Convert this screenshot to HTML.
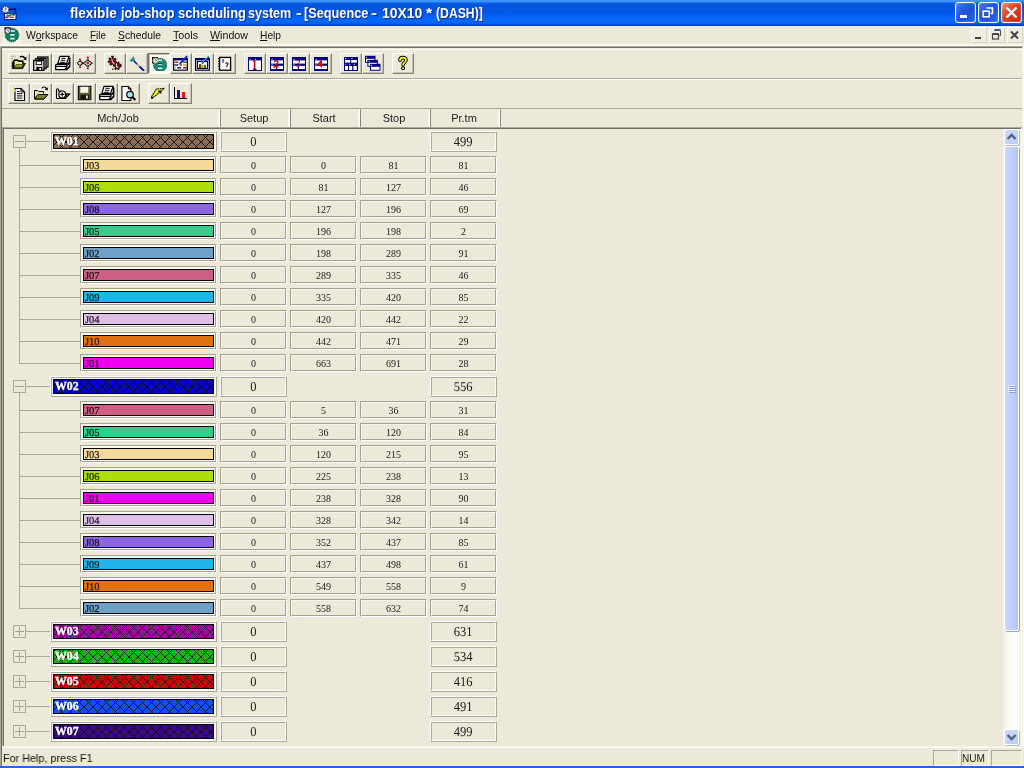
<!DOCTYPE html><html><head><meta charset="utf-8"><title>flexible job-shop scheduling system</title><style>
*{box-sizing:border-box;margin:0;padding:0}
html,body{width:1024px;height:768px;overflow:hidden}
body{position:relative;background:#ECE9D8;font-family:"Liberation Sans",sans-serif;font-size:11px;color:#000}
.a{position:absolute}
.title{left:0;top:0;width:1024px;height:26px;background:linear-gradient(to bottom,#3D97FD 0px,#3A92FA 1.5px,#1A72EA 2.6px,#0557DE 4px,#0455E0 9px,#0458E8 13px,#0460F4 16px,#0468F8 19px,#0467F8 22px,#045CEA 24px,#0242C4 25px,#0034B0 26px)}
.ttext{top:4px;color:#fff;font-weight:bold;font-size:14px;line-height:18px;white-space:nowrap;text-shadow:1px 1px 1px #0A2A8A;transform-origin:0 0}
.menu span{position:absolute;top:28px;line-height:14px;font-size:11px;white-space:nowrap;color:#111}
.menu u{text-decoration:underline}
.tb{width:22px;height:21px;border:1px solid;border-color:#fff #85826F #85826F #fff;background:#ECE9D8;box-shadow:inset -1px -1px 0 #C6C3B3}
.tb svg{position:absolute;left:2px;top:1px}
.hd{top:110px;height:18px;font-size:11px;line-height:17px;text-align:center;color:#222}
.wc{height:21px;border:1px solid;border-color:#fff #ACA899 #ACA899 #fff;font-family:"Liberation Serif",serif;font-size:13.5px;text-rendering:geometricPrecision;line-height:17px;text-align:center;color:#1a1a1a}
.wc i{position:absolute;left:0;top:0;right:0;bottom:0;border:1px solid;border-color:#ACA899 #fff #fff #ACA899}
.wc b{font-weight:normal;display:inline-block;transform:scaleX(.93);position:relative;left:0;top:1px}
.jc{height:18px;border:1px solid;border-color:#A5A190 #fff #fff #A5A190;font-family:"Liberation Serif",serif;font-size:10px;line-height:15px;text-align:center;color:#222}
.jc i{position:absolute;left:0;top:0;right:0;bottom:0;border:1px solid;border-color:#F7F6EE #A5A190 #A5A190 #F7F6EE}
.jc b{font-weight:normal;display:inline-block;position:relative;left:0;top:1px}
.jb{height:12px;border:1px solid #000;font-family:"Liberation Serif",serif;font-size:10.5px;line-height:11px;color:rgba(0,0,0,.8);-webkit-text-stroke:.25px rgba(0,0,0,.8);text-rendering:geometricPrecision}
.jb span{position:absolute;left:1px;top:1px}
.wb{height:15px;border:1px solid #000;overflow:hidden}
.wl{font-family:"Liberation Serif",serif;font-weight:bold;font-size:13px;line-height:14px;color:#fff;-webkit-text-stroke:.35px #fff;left:1px;top:-1px;transform-origin:0 0;transform:scaleX(.91)}
.ln{background:#ACA899}
.xb{width:13px;height:13px;border:1px solid #ACA899}
</style></head><body><div id="root" style="position:absolute;left:0;top:0;width:1024px;height:768px;will-change:transform">
<div class="a title"></div>
<div class="a ttext" style="left:69.9px;transform:scaleX(0.968)">flexible</div>
<div class="a ttext" style="left:120.8px;transform:scaleX(0.903)">job-shop</div>
<div class="a ttext" style="left:177.7px;transform:scaleX(0.919)">scheduling</div>
<div class="a ttext" style="left:248.4px;transform:scaleX(0.895)">system</div>
<div class="a ttext" style="left:296.0px;transform:scaleX(1.241)">-</div>
<div class="a ttext" style="left:304.0px;transform:scaleX(0.909)">[Sequence</div>
<div class="a ttext" style="left:370.6px;transform:scaleX(1.284)">-</div>
<div class="a ttext" style="left:382.0px;transform:scaleX(0.995)">10X10</div>
<div class="a ttext" style="left:425.6px;transform:scaleX(1.137)">*</div>
<div class="a ttext" style="left:436.4px;transform:scaleX(0.872)">(DASH)]</div>
<svg class="a" style="left:1px;top:5px" width="17" height="16" viewBox="0 0 17 16"><rect x="3.4" y="8.4" width="11.6" height="6.2" fill="#F6F6F4" stroke="#0A0A70" stroke-width="1"/><path d="M4.2 12.2h3.2" stroke="#0A0A60" stroke-width="1.3"/><path d="M8.6 12.3h4.2" stroke="#B04810" stroke-width="1.3"/><rect x="11.2" y="9.2" width="2.6" height="1.3" fill="#10106A"/><path d="M8.2 4.6l6.4-.6M14.4 3.4v4.4" stroke="#0A0A78" stroke-width="1.5" fill="none"/><circle cx="4.6" cy="4.6" r="3.3" fill="#ECE8EC" stroke="#14145A" stroke-width="1" stroke-dasharray="1.6 .8"/><path d="M4.6 2.6v2.6" stroke="#7A8A40" stroke-width="1.4" fill="none"/><path d="M3 6l3 .6" stroke="#E8C0B8" stroke-width="1.4"/><path d="M5.6 9.8l2.8 1 3-2.6" stroke="#1E8048" stroke-width="1.9" fill="none"/><path d="M6.4 9.3h2.2" stroke="#F0F8F0" stroke-width=".9"/></svg>
<div class="a" style="left:955px;top:2px;width:21px;height:21px;border:1px solid #fff;border-radius:3px;background:linear-gradient(135deg,#4A7CF0 0%,#2A5CE0 35%,#1E50D8 60%,#2E6AE8 100%);box-shadow:inset 0 0 2px rgba(255,255,255,.35)"><svg class="a" style="left:-1px;top:-1px" width="21" height="21"><rect x="5" y="13" width="7" height="3" fill="#fff"/></svg></div><div class="a" style="left:978px;top:2px;width:21px;height:21px;border:1px solid #fff;border-radius:3px;background:linear-gradient(135deg,#4A7CF0 0%,#2A5CE0 35%,#1E50D8 60%,#2E6AE8 100%);box-shadow:inset 0 0 2px rgba(255,255,255,.35)"><svg class="a" style="left:-1px;top:-1px" width="21" height="21"><path d="M8.5 6h6v5.5h-2" fill="none" stroke="#fff" stroke-width="1.6"/><rect x="5.2" y="9.2" width="6" height="5.6" fill="none" stroke="#fff" stroke-width="1.6"/></svg></div><div class="a" style="left:1001px;top:2px;width:21px;height:21px;border:1px solid #fff;border-radius:3px;background:linear-gradient(135deg,#F09070 0%,#E05030 35%,#D03818 65%,#C83010 100%);box-shadow:inset 0 0 2px rgba(255,255,255,.35)"><svg class="a" style="left:-1px;top:-1px" width="21" height="21"><path d="M5.5 5.5l10 10M15.5 5.5l-10 10" stroke="#fff" stroke-width="2.3"/></svg></div><div class="a" style="left:971px;top:27px;width:16px;height:16px;border:1px solid;border-color:#fff #D8D4C4 #D8D4C4 #fff;background:#F0EEE2"><svg class="a" style="left:-1px;top:-1px" width="16" height="16"><rect x="4" y="10" width="6" height="2" fill="#444"/></svg></div><div class="a" style="left:989px;top:27px;width:16px;height:16px;border:1px solid;border-color:#fff #D8D4C4 #D8D4C4 #fff;background:#F0EEE2"><svg class="a" style="left:-1px;top:-1px" width="16" height="16"><path d="M5.5 3.5h6v5h-1" fill="none" stroke="#444" stroke-width="1"/><path d="M5.5 3h6" stroke="#445A90" stroke-width="2"/><rect x="3.5" y="7" width="6" height="5" fill="none" stroke="#444" stroke-width="1.2"/><path d="M3.5 7h6" stroke="#444" stroke-width="2"/></svg></div><div class="a" style="left:1007px;top:27px;width:16px;height:16px;border:1px solid;border-color:#fff #D8D4C4 #D8D4C4 #fff;background:#F0EEE2"><svg class="a" style="left:-1px;top:-1px" width="16" height="16"><path d="M4 4.5l7 7M11 4.5l-7 7" stroke="#444" stroke-width="2"/></svg></div>
<div class="a" style="left:0;top:26px;width:1024px;height:1px;background:#E8EDF8"></div>
<div class="menu">
<span style="left:26px;transform-origin:0 0;transform:scaleX(0.948)">W<u>o</u>rkspace</span>
<span style="left:90px;transform-origin:0 0;transform:scaleX(0.901)"><u>F</u>ile</span>
<span style="left:118px;transform-origin:0 0;transform:scaleX(0.937)"><u>S</u>chedule</span>
<span style="left:173px;transform-origin:0 0;transform:scaleX(0.973)"><u>T</u>ools</span>
<span style="left:210px;transform-origin:0 0;transform:scaleX(0.971)"><u>W</u>indow</span>
<span style="left:260px;transform-origin:0 0;transform:scaleX(0.928)"><u>H</u>elp</span>
</div>
<svg class="a" style="left:3px;top:26px" width="18" height="18" viewBox="0 0 18 18"><rect x="0" y="0" width="18" height="18" fill="#F6F5EE" opacity=".7"/><circle cx="9" cy="9" r="6.8" fill="#108060" stroke="#063828" stroke-width=".9" stroke-dasharray="1.3 .8"/><rect x="1.5" y="1.2" width="6" height="6" fill="#0A0A0A"/><circle cx="4.8" cy="4.8" r="2.5" fill="#F4F4EC" stroke="#5A6A4A" stroke-width=".7"/><path d="M4.8 3.4v1.6h1.2" stroke="#333" stroke-width=".7" fill="none"/><rect x="7.8" y="4.2" width="4" height="1.6" fill="#E8F0EC"/><rect x="7.2" y="8" width="4.4" height="1.7" fill="#E8F0EC"/><rect x="7.2" y="11.8" width="4.4" height="1.7" fill="#E8F0EC"/></svg>
<div class="a" style="left:0;top:44px;width:1024px;height:1px;background:#F6F5EE"></div>
<div class="a" style="left:0;top:45px;width:1024px;height:1px;background:#fff"></div>
<div class="a" style="left:0;top:46px;width:1023px;height:1px;background:#ACA899"></div>
<div class="a" style="left:1px;top:47px;width:1021px;height:1px;background:#716F64"></div>
<div class="a" style="left:2px;top:49px;width:1020px;height:1px;background:#fff"></div>
<div class="a" style="left:0;top:46px;width:1px;height:720px;background:#ACA899"></div>
<div class="a" style="left:1px;top:47px;width:1px;height:719px;background:#716F64"></div>
<div class="a" style="left:1022px;top:47px;width:1px;height:699px;background:#F1EFE2"></div>
<div class="a" style="left:1023px;top:46px;width:1px;height:701px;background:#fff"></div>
<div class="a" style="left:2px;top:78px;width:1020px;height:1px;background:#ACA899"></div>
<div class="a" style="left:2px;top:79px;width:1020px;height:1px;background:#fff"></div>
<div class="a" style="left:2px;top:108px;width:1020px;height:1px;background:#ACA899"></div>
<div class="a tb" style="left:8px;top:53px"><svg width="16" height="16" viewBox="0 0 16 16" ><path d="M1.2 7.6l2.2-2.8h3.6l1 1h4.2v2.6h2.2l-2.8 5.2h-10.4z" fill="#000" stroke="#000" stroke-width=".8" stroke-linejoin="round"/><path d="M3.6 6h2.8l1 1h3.8v2.2h-6l-1.6 2.6z" fill="#E6EE9C"/><path d="M5.6 9.6h7l-2 3h-7.4z" fill="#8A9828"/><path d="M8.8 2.2q3-2 5 1.2" fill="none" stroke="#000" stroke-width="1.3"/><path d="M15.4 1.6v3.6l-3-.8z" fill="#000"/><g fill="#9A9A58"><rect x=".4" y=".8" width="1" height="1"/><rect x="2" y=".8" width="1" height="1"/><rect x="3.6" y=".8" width="1" height="1"/><rect x=".4" y="2.8" width="1.4" height="1"/><rect x=".8" y="4.6" width="1" height="1"/></g></svg></div>
<div class="a tb" style="left:30px;top:53px"><svg width="16" height="16" viewBox="0 0 16 16" ><rect x="4.6" y="2" width="10.4" height="10" fill="#D0D0C8" stroke="#000" stroke-width="1.2"/><rect x="7.199999999999999" y="2.8" width="5.4" height="3.4" fill="#fff" stroke="#000" stroke-width=".8"/><rect x="2.6" y="3.7" width="10.4" height="10" fill="#D0D0C8" stroke="#000" stroke-width="1.2"/><rect x="5.2" y="4.5" width="5.4" height="3.4" fill="#fff" stroke="#000" stroke-width=".8"/><rect x="0.6" y="5.4" width="10.4" height="10" fill="#D0D0C8" stroke="#000" stroke-width="1.2"/><rect x="3.2" y="6.2" width="5.4" height="3.4" fill="#fff" stroke="#000" stroke-width=".8"/><rect x="3.4" y="12.0" width="6" height="3.2" fill="#000"/><rect x="6.3999999999999995" y="13.0" width="1.7" height="2" fill="#fff"/></svg></div>
<div class="a tb" style="left:52px;top:53px"><svg width="16" height="16" viewBox="0 0 16 16" ><path d="M5 1.3h9.2l-2.7 7.1h-8.6z" fill="#fff" stroke="#000" stroke-width="1.2" stroke-linejoin="round"/><path d="M6.4 3.3h4.3M5.8 5.3h4.5M5.2 7.3h4.6" stroke="#000" stroke-width="1"/><path d="M14.6 3v3.4" stroke="#000" stroke-width="1.6" stroke-linecap="round"/><path d="M1.3 9.4h10.6l2.9-2.4v4.5l-2.9 3.1h-11.2v-4.4z" fill="#fff" stroke="#000" stroke-width="1.3" stroke-linejoin="round"/><path d="M.7 11.4h11.2" stroke="#000" stroke-width="1.3"/><path d="M11.9 9.4v5.2" stroke="#000" stroke-width="1.2"/><rect x="9.8" y="12.6" width="2" height="1.8" fill="#000"/><path d="M12.6 10.5l1.6-1.6M12.8 12.6l1.4-1.5" stroke="#000" stroke-width=".9"/></svg></div>
<div class="a tb" style="left:74px;top:53px"><svg width="16" height="16" viewBox="0 0 16 16" ><rect x="-2" y="-1" width="20" height="19" fill="#F6E4E0" opacity=".55"/><path d="M3 5.6l2.8 2.6-2.8 2.6-2.8-2.6z" fill="none" stroke="#000" stroke-width="1.3" stroke-dasharray="1.7 .5"/><path d="M10.8 4.7l4.1 3.5-4.1 3.5-4.1-3.5z" fill="none" stroke="#000" stroke-width="1.3" stroke-dasharray="1.7 .5"/><g fill="#A42434"><circle cx="3" cy="4.4" r="1"/><circle cx="3" cy="12.2" r="1"/><circle cx="10.8" cy="2.6" r="1.2"/><circle cx="10.8" cy="8" r="1.4"/><circle cx="10.8" cy="13.4" r="1.1"/></g></svg></div>
<div class="a tb" style="left:104px;top:53px"><svg width="16" height="16" viewBox="0 0 16 16" ><circle cx="5.4" cy="6.2" r="3.4" fill="#6A1018" stroke="#2A0608" stroke-width="2.4" stroke-dasharray="1.7 1.3"/><circle cx="10.4" cy="10.6" r="3" fill="#6A1018" stroke="#1A0404" stroke-width="2.4" stroke-dasharray="1.5 1.3"/><circle cx="5.4" cy="6.2" r="3.2" fill="#6A1018"/><circle cx="10.4" cy="10.6" r="2.8" fill="#6A1018"/><path d="M4.6 3.6l1 3.6 2 2" stroke="#E8B4B8" stroke-width="1.1" fill="none"/><path d="M9.4 8.6l.2 3 1.4 1" stroke="#F0D0D0" stroke-width="1.2" fill="none"/><path d="M4 1.3h2.8" stroke="#000" stroke-width="1"/><path d="M5 14.3h7.6" stroke="#000" stroke-width="1.1" stroke-dasharray="1.6 1.2"/></svg></div>
<div class="a tb" style="left:126px;top:53px"><svg width="16" height="16" viewBox="0 0 16 16" ><path d="M.4 5.6l4.3-4.3 1.2 3.6-3.6 1.9z" fill="#208880"/><path d="M1 5.4l3.5-3.4" stroke="#70D0C8" stroke-width=".8"/><path d="M4.6 5.6l3.6 3.6" stroke="#102880" stroke-width="1.5"/><path d="M8.4 9.4l2.2 2.2" stroke="#A0A0A8" stroke-width="1.5"/><path d="M11 12l3.6 3.4" stroke="#1010B0" stroke-width="1.9" stroke-linecap="round"/></svg></div>
<div class="a tb" style="left:148px;top:53px;border-color:#716F64 #fff #fff #716F64;background:#F8F7F2;box-shadow:inset 1px 1px 0 #C4C0B0"><svg width="16" height="16" viewBox="0 0 16 16" ><circle cx="9.2" cy="10" r="6.7" fill="#109070" stroke="#083828" stroke-width=".9" stroke-dasharray="1.3 .9"/><rect x="1" y="2" width="6" height="6.4" fill="#0A0A0A"/><circle cx="4.6" cy="5.6" r="2.7" fill="#F0F0E0" stroke="#8A9060" stroke-width=".9"/><path d="M4.6 4v1.8h1.5" stroke="#555" stroke-width=".7" fill="none"/><rect x="7.4" y="4.6" width="3.8" height="1.5" fill="#D8F0EC"/><rect x="7" y="8.2" width="4.2" height="1" fill="#102060"/><rect x="7" y="9.2" width="4.2" height="1.4" fill="#C8E0F8"/><rect x="7" y="10.6" width="4.2" height="1" fill="#0A3030"/><rect x="7" y="12.4" width="4.2" height="1.6" fill="#E0F4F0"/></svg></div>
<div class="a tb" style="left:170px;top:53px"><svg width="16" height="16" viewBox="0 0 16 16" ><rect x=".6" y="3.6" width="13.8" height="11.6" fill="#fff" stroke="#00003A" stroke-width="1.2"/><rect x="1" y="3.4" width="13" height="2" fill="#000080"/><path d="M1.4 7.2h4" stroke="#8A1818" stroke-width="1.3"/><path d="M10 7.2h4" stroke="#284020" stroke-width="1.3"/><path d="M1.4 10h4" stroke="#101070" stroke-width="1.4"/><path d="M6.6 10h2.4" stroke="#703010" stroke-width="1.4"/><path d="M10 10h4" stroke="#C89820" stroke-width="1.5"/><path d="M1.4 12.8h1.8" stroke="#C09830" stroke-width="1.4"/><path d="M4.2 12.8h4" stroke="#101010" stroke-width="1.4"/><path d="M10 12.8h4" stroke="#701010" stroke-width="1.4"/><path d="M14 1.2l-6.8 7" stroke="#1838D0" stroke-width="1.7"/><path d="M14.4 1.8l-6.6 6.8" stroke="#000060" stroke-width=".7"/><path d="M7.4 8l-.9 1.2" stroke="#000" stroke-width="1.1"/></svg></div>
<div class="a tb" style="left:192px;top:53px"><svg width="16" height="16" viewBox="0 0 16 16" ><rect x=".6" y="3.6" width="13.8" height="11.6" fill="#fff" stroke="#000050" stroke-width="1.2"/><rect x="1" y="3.4" width="13" height="2" fill="#000080"/><rect x="2.4" y="6.5" width="10.2" height="7" fill="#fff" stroke="#000" stroke-width="1.1"/><rect x="4" y="9" width="2.2" height="4" fill="#883010"/><rect x="6.6" y="10" width="1.4" height="3" fill="#909030"/><rect x="8.8" y="9.8" width="2.2" height="3.2" fill="#208828"/><path d="M13.6 1.2l-7 7.2" stroke="#38A8F0" stroke-width="1.5"/><path d="M14.2 1.8l-7 7.2" stroke="#000050" stroke-width=".8"/></svg></div>
<div class="a tb" style="left:214px;top:53px"><svg width="16" height="16" viewBox="0 0 16 16" ><rect x="2.6" y="2.4" width="11" height="12.8" fill="#FCFCFA" stroke="#000" stroke-width="1.3"/><path d="M1.2 3.6h1.4M1.2 6.2h1.4M1.2 8.8h1.4M1.2 11.4h1.4M1.2 14h1.4" stroke="#000" stroke-width="1.2"/><path d="M6 4.1v3.6" stroke="#2828B8" stroke-width="1.3"/><path d="M8.6 8.6q1.6-1.6 2.4 0q0 .8-1 1.6v1" fill="none" stroke="#601828" stroke-width="1.2"/><rect x="9.4" y="11.2" width="1.1" height="1" fill="#601828"/></svg></div>
<div class="a tb" style="left:244px;top:53px"><svg width="16" height="16" viewBox="0 0 16 16" ><rect x="1.5" y="2.5" width="13" height="13" fill="#fff" stroke="#000080"/><rect x="2" y="3" width="12" height="2.4" fill="#000080"/><rect x="2.6" y="3.8" width="1" height="1" fill="#fff"/><rect x="8" y="3.8" width="1" height="1" fill="#fff"/><path d="M6.2 6.5l1.4-1v8.5M6 14.2h3.4" stroke="#D4001C" stroke-width="1.5" fill="none"/><path d="M7.6 14v1.8" stroke="#000060" stroke-width="1"/></svg></div>
<div class="a tb" style="left:266px;top:53px"><svg width="16" height="16" viewBox="0 0 16 16" ><rect x="1.5" y="2.5" width="13" height="13" fill="#fff" stroke="#000080"/><rect x="2" y="3" width="12" height="2.4" fill="#000080"/><rect x="2.6" y="3.8" width="1" height="1" fill="#fff"/><rect x="2" y="8.6" width="12" height="2.2" fill="#000080"/><rect x="2.6" y="9.2" width="1" height="1" fill="#fff"/><rect x="2" y="14" width="12" height="1" fill="#000080"/><rect x="7" y="10.8" width="1" height="3.5" fill="#000080"/><path d="M5.2 7q2-2.3 3.6-.5q.6 1.6-3.4 5.2h4" stroke="#D4001C" stroke-width="1.4" fill="none"/></svg></div>
<div class="a tb" style="left:288px;top:53px"><svg width="16" height="16" viewBox="0 0 16 16" ><rect x="1.5" y="2.5" width="13" height="13" fill="#fff" stroke="#000080"/><rect x="2" y="3" width="12" height="2.4" fill="#000080"/><rect x="2.6" y="3.8" width="1" height="1" fill="#fff"/><rect x="2" y="8.6" width="12" height="2.2" fill="#000080"/><rect x="2.6" y="9.2" width="1" height="1" fill="#fff"/><rect x="2" y="14" width="12" height="1" fill="#000080"/><rect x="7" y="10.8" width="1" height="3.5" fill="#000080"/><path d="M5.5 6q2-1.6 3 0q0 2-2 2.4q2.6.4 2 2.6q-1.4 1.6-3.2.2" stroke="#D4001C" stroke-width="1.3" fill="none" stroke-dasharray="2 .7"/></svg></div>
<div class="a tb" style="left:310px;top:53px"><svg width="16" height="16" viewBox="0 0 16 16" ><rect x="1.5" y="2.5" width="13" height="13" fill="#fff" stroke="#000080"/><rect x="2" y="3" width="12" height="2.4" fill="#000080"/><rect x="2.6" y="3.8" width="1" height="1" fill="#fff"/><rect x="2" y="8.6" width="12" height="2.2" fill="#000080"/><rect x="2.6" y="9.2" width="1" height="1" fill="#fff"/><rect x="2" y="14" width="12" height="1" fill="#000080"/><path d="M8.3 5.5l-3 4.5h4.5M8.3 5.5v7" stroke="#D4001C" stroke-width="1.5" fill="none"/></svg></div>
<div class="a tb" style="left:340px;top:53px"><svg width="16" height="16" viewBox="0 0 16 16" ><rect x="1" y="2" width="14" height="14" fill="#000080"/><rect x="2" y="5" width="5.2" height="2.6" fill="#fff"/><rect x="8.2" y="5" width="5.6" height="2.6" fill="#fff"/><rect x="2" y="11" width="3" height="4" fill="#fff"/><rect x="6" y="11" width="3.2" height="4" fill="#fff"/><rect x="10.4" y="11" width="3.4" height="4" fill="#fff"/><rect x="2.2" y="3" width="1" height="1" fill="#fff"/><rect x="8.5" y="3" width="1" height="1" fill="#fff"/><rect x="2.2" y="8.8" width="1" height="1" fill="#fff"/><rect x="6.3" y="8.8" width="1" height="1" fill="#fff"/><rect x="10.7" y="8.8" width="1" height="1" fill="#fff"/></svg></div>
<div class="a tb" style="left:362px;top:53px"><svg width="16" height="16" viewBox="0 0 16 16" ><rect x="0" y="0.8" width="10.5" height="7" fill="#000080"/><rect x="1" y="3.8" width="8.5" height="3" fill="#fff"/><rect x="1.2" y="1.8" width="1" height="1" fill="#fff"/><rect x="2.4" y="4.8" width="10.5" height="7" fill="#000080"/><rect x="3.4" y="7.8" width="8.5" height="3" fill="#fff"/><rect x="3.5999999999999996" y="5.8" width="1" height="1" fill="#fff"/><rect x="5" y="8.8" width="10.5" height="7" fill="#000080"/><rect x="6" y="11.8" width="8.5" height="3" fill="#fff"/><rect x="6.2" y="9.8" width="1" height="1" fill="#fff"/></svg></div>
<div class="a tb" style="left:392px;top:53px"><svg width="16" height="16" viewBox="0 0 16 16" ><g fill="none" stroke-linecap="round"><path d="M5 5.2q0-2.6 3-2.6q3 0 3 2.5q0 1.5-1.8 2.6q-1.1.7-1.1 2.2" stroke="#000" stroke-width="3.6"/><path d="M8.1 13.1v.1" stroke="#000" stroke-width="3.8"/><path d="M5 5.2q0-2.6 3-2.6q3 0 3 2.5q0 1.5-1.8 2.6q-1.1.7-1.1 2.2" stroke="#F4F420" stroke-width="1.7"/><path d="M8.1 13.1v.1" stroke="#F4F420" stroke-width="1.9"/></g></svg></div>
<div class="a tb" style="left:8px;top:83px"><svg width="16" height="16" viewBox="0 0 16 16" ><path d="M4 3.5h6l3.5 3.5v8.5h-9.5z" fill="#fff" stroke="#000" stroke-width="1.2"/><path d="M10 3.5v3.5h3.5" fill="none" stroke="#000"/><path d="M5.8 6.5h3M5.8 8.7h5.6M5.8 10.9h5.6M5.8 13.1h5.6" stroke="#000" stroke-width="1"/><path d="M2.5 2v7M0 5.5h5" stroke="#E8E870" stroke-width="1"/><path d="M1 3.5l3 4M4 3.5l-3 4" stroke="#F4F4B0" stroke-width=".8"/></svg></div>
<div class="a tb" style="left:30px;top:83px"><svg width="16" height="16" viewBox="0 0 16 16" ><path d="M1.5 5.5h3l1 1h5v2" fill="#F4F4A8" stroke="#000"/><path d="M1.5 5.5v8.5h9.5" fill="none" stroke="#000"/><path d="M2 6h2.5l1 1H10v2H4.5L2 13.5z" fill="#E8E8A0"/><path d="M4.8 9.5h10.2l-4 4.5h-9.5z" fill="#808020" stroke="#000"/><path d="M8.8 3.3c1.3-1.8 3.6-1.8 5 .6" fill="none" stroke="#000" stroke-width="1.1"/><path d="M15 2.6l-.5 3-2.8-1z" fill="#000"/></svg></div>
<div class="a tb" style="left:52px;top:83px"><svg width="16" height="16" viewBox="0 0 16 16" ><path d="M1.5 13.5v-8.5q0-1.2 1-1.2q1 0 1 1.2v1h3" fill="none" stroke="#000" stroke-width="1.1"/><path d="M1.5 13.5h9l4-4.5h-3.5" fill="none" stroke="#000" stroke-width="1.1"/><path d="M10.5 13.5l4-4.5h-3z" fill="#808020" stroke="#000"/><circle cx="7.2" cy="9.4" r="3.4" fill="#F8F8E8" stroke="#000" stroke-width="1.2"/><path d="M7.2 7.4v4M5.2 9.4h4" stroke="#000" stroke-width="1.1"/></svg></div>
<div class="a tb" style="left:74px;top:83px"><svg width="16" height="16" viewBox="0 0 16 16" ><rect x="1.3" y="1.3" width="12.6" height="13.4" fill="#5C5C28" stroke="#000" stroke-width="1"/><rect x="3.3" y="1.8" width="8" height="6" fill="#F4F4E8"/><rect x="3.5" y="9.8" width="8.5" height="4.5" fill="#101008"/><rect x="9" y="10.5" width="1.8" height="3.2" fill="#E8E8D8"/><rect x="12.2" y="2.5" width="1" height="1" fill="#D8D8A0"/></svg></div>
<div class="a tb" style="left:96px;top:83px"><svg width="16" height="16" viewBox="0 0 16 16" ><path d="M5 1.3h9.2l-2.7 7.1h-8.6z" fill="#fff" stroke="#000" stroke-width="1.2" stroke-linejoin="round"/><path d="M6.4 3.3h4.3M5.8 5.3h4.5M5.2 7.3h4.6" stroke="#000" stroke-width="1"/><path d="M14.6 3v3.4" stroke="#000" stroke-width="1.6" stroke-linecap="round"/><path d="M1.3 9.4h10.6l2.9-2.4v4.5l-2.9 3.1h-11.2v-4.4z" fill="#fff" stroke="#000" stroke-width="1.3" stroke-linejoin="round"/><path d="M.7 11.4h11.2" stroke="#000" stroke-width="1.3"/><path d="M11.9 9.4v5.2" stroke="#000" stroke-width="1.2"/><rect x="9.8" y="12.6" width="2" height="1.8" fill="#000"/><path d="M12.6 10.5l1.6-1.6M12.8 12.6l1.4-1.5" stroke="#000" stroke-width=".9"/></svg></div>
<div class="a tb" style="left:118px;top:83px"><svg width="16" height="16" viewBox="0 0 16 16" ><g transform="translate(-1.6,0)"><path d="M2.5 1.5h6.5l2.5 2.5v11.5h-9z" fill="#fff" stroke="#000" stroke-width="1.1"/><path d="M9 1.5v2.5h2.5" fill="none" stroke="#000"/><circle cx="10.6" cy="9.6" r="3.3" fill="#A8E0E8" stroke="#000" stroke-width="1.2"/><path d="M13 12l3 3" stroke="#000" stroke-width="2"/></g></svg></div>
<div class="a tb" style="left:148px;top:83px"><svg width="16" height="16" viewBox="0 0 16 16" ><path d="M13 3.4l-7.6.6-5 7.8.8 1.6 8.2-6.8z" fill="#F0F018" stroke="#000" stroke-width="1.1" stroke-dasharray="1.8 .7" stroke-linejoin="round"/><path d="M.4 12.4l1.2.8" stroke="#000" stroke-width="2"/><path d="M7.4 6l2.4 1-.2 1.4" fill="none" stroke="#000" stroke-width="1.4"/></svg></div>
<div class="a tb" style="left:170px;top:83px"><svg width="16" height="16" viewBox="0 0 16 16" shape-rendering="crispEdges"><path d="M1.5 2v11.5h12.5" fill="none" stroke="#000" stroke-width="1"/><rect x="4.2" y="5.2" width="2.6" height="8" fill="#101890"/><rect x="9.3" y="7" width="2.6" height="6" fill="#E01818"/></svg></div>
<div class="a hd" style="left:97px;width:42px">Mch/Job</div>
<div class="a hd" style="left:219px;width:70px">Setup</div>
<div class="a hd" style="left:289px;width:70px">Start</div>
<div class="a hd" style="left:359px;width:70px">Stop</div>
<div class="a hd" style="left:429px;width:70px">Pr.tm</div>
<div class="a" style="left:218px;top:109px;width:1px;height:18px;background:#F8F7F0"></div>
<div class="a" style="left:219px;top:109px;width:1px;height:18px;background:#fff"></div>
<div class="a" style="left:220px;top:109px;width:1px;height:18px;background:#8A8878"></div>
<div class="a" style="left:288px;top:109px;width:1px;height:18px;background:#F8F7F0"></div>
<div class="a" style="left:289px;top:109px;width:1px;height:18px;background:#fff"></div>
<div class="a" style="left:290px;top:109px;width:1px;height:18px;background:#8A8878"></div>
<div class="a" style="left:358px;top:109px;width:1px;height:18px;background:#F8F7F0"></div>
<div class="a" style="left:359px;top:109px;width:1px;height:18px;background:#fff"></div>
<div class="a" style="left:360px;top:109px;width:1px;height:18px;background:#8A8878"></div>
<div class="a" style="left:428px;top:109px;width:1px;height:18px;background:#F8F7F0"></div>
<div class="a" style="left:429px;top:109px;width:1px;height:18px;background:#fff"></div>
<div class="a" style="left:430px;top:109px;width:1px;height:18px;background:#8A8878"></div>
<div class="a" style="left:498px;top:109px;width:1px;height:18px;background:#F8F7F0"></div>
<div class="a" style="left:499px;top:109px;width:1px;height:18px;background:#fff"></div>
<div class="a" style="left:500px;top:109px;width:1px;height:18px;background:#8A8878"></div>
<div class="a" style="left:2px;top:127px;width:1020px;height:1px;background:#ACA899"></div>
<div class="a" style="left:3px;top:128px;width:1018px;height:1px;background:#716F64"></div>
<div class="a" style="left:2px;top:127px;width:1px;height:620px;background:#ACA899"></div>
<div class="a" style="left:3px;top:128px;width:1px;height:618px;background:#716F64"></div>
<div class="a" style="left:4px;top:129px;width:1px;height:617px;background:#F1EFE2"></div>
<div class="a" style="left:1020px;top:129px;width:1px;height:617px;background:#F1EFE2"></div>
<div class="a" style="left:1021px;top:128px;width:1px;height:619px;background:#fff"></div>
<svg width="0" height="0" style="position:absolute"><defs><pattern id="P" patternUnits="userSpaceOnUse" x="7" y="2" width="9" height="9"><g fill="#000" shape-rendering="crispEdges" opacity=".8"><rect x="0" y="0" width="1" height="1"/><rect x="1" y="1" width="1" height="1"/><rect x="2" y="2" width="1" height="1"/><rect x="3" y="3" width="1" height="1"/><rect x="4" y="4" width="1" height="1"/><rect x="5" y="5" width="1" height="1"/><rect x="6" y="6" width="1" height="1"/><rect x="7" y="7" width="1" height="1"/><rect x="8" y="8" width="1" height="1"/><rect x="8" y="1" width="1" height="1"/><rect x="7" y="2" width="1" height="1"/><rect x="6" y="3" width="1" height="1"/><rect x="5" y="4" width="1" height="1"/><rect x="4" y="5" width="1" height="1"/><rect x="3" y="6" width="1" height="1"/><rect x="2" y="7" width="1" height="1"/><rect x="1" y="8" width="1" height="1"/></g></pattern></defs></svg>
<div class="a xb" style="left:13px;top:135px"></div>
<div class="a" style="left:15px;top:141px;width:9px;height:1px;background:#A5A290"></div>
<div class="a ln" style="left:26px;top:141px;width:24px;height:1px"></div>
<div class="a wc" style="left:50px;top:131px;width:167px;background:#FAFAF4"><i></i></div>
<div class="a wb" style="left:53px;top:134px;width:161px;background:#8B6B52"><svg class="a" style="left:0;top:0" width="159" height="13"><rect width="159" height="13" fill="url(#P)"/></svg><div class="a wl">W01</div></div>
<div class="a wc" style="left:220px;top:131px;width:67px"><i></i><b>0</b></div>
<div class="a wc" style="left:430px;top:131px;width:67px"><i></i><b>499</b></div>
<div class="a ln" style="left:20px;top:165px;width:60px;height:1px"></div>
<div class="a jc" style="left:80px;top:156px;width:137px;background:#FAFAF4"><i></i></div>
<div class="a jb" style="left:83px;top:159px;width:131px;background:#F5D99A"><span>J03</span></div>
<div class="a jc" style="left:220px;top:156px;width:67px"><i></i><b>0</b></div>
<div class="a jc" style="left:290px;top:156px;width:67px"><i></i><b>0</b></div>
<div class="a jc" style="left:360px;top:156px;width:67px"><i></i><b>81</b></div>
<div class="a jc" style="left:430px;top:156px;width:67px"><i></i><b>81</b></div>
<div class="a ln" style="left:20px;top:187px;width:60px;height:1px"></div>
<div class="a jc" style="left:80px;top:178px;width:137px;background:#FAFAF4"><i></i></div>
<div class="a jb" style="left:83px;top:181px;width:131px;background:#AEDD0C"><span>J06</span></div>
<div class="a jc" style="left:220px;top:178px;width:67px"><i></i><b>0</b></div>
<div class="a jc" style="left:290px;top:178px;width:67px"><i></i><b>81</b></div>
<div class="a jc" style="left:360px;top:178px;width:67px"><i></i><b>127</b></div>
<div class="a jc" style="left:430px;top:178px;width:67px"><i></i><b>46</b></div>
<div class="a ln" style="left:20px;top:209px;width:60px;height:1px"></div>
<div class="a jc" style="left:80px;top:200px;width:137px;background:#FAFAF4"><i></i></div>
<div class="a jb" style="left:83px;top:203px;width:131px;background:#8C66E0"><span>J08</span></div>
<div class="a jc" style="left:220px;top:200px;width:67px"><i></i><b>0</b></div>
<div class="a jc" style="left:290px;top:200px;width:67px"><i></i><b>127</b></div>
<div class="a jc" style="left:360px;top:200px;width:67px"><i></i><b>196</b></div>
<div class="a jc" style="left:430px;top:200px;width:67px"><i></i><b>69</b></div>
<div class="a ln" style="left:20px;top:231px;width:60px;height:1px"></div>
<div class="a jc" style="left:80px;top:222px;width:137px;background:#FAFAF4"><i></i></div>
<div class="a jb" style="left:83px;top:225px;width:131px;background:#35CC8C"><span>J05</span></div>
<div class="a jc" style="left:220px;top:222px;width:67px"><i></i><b>0</b></div>
<div class="a jc" style="left:290px;top:222px;width:67px"><i></i><b>196</b></div>
<div class="a jc" style="left:360px;top:222px;width:67px"><i></i><b>198</b></div>
<div class="a jc" style="left:430px;top:222px;width:67px"><i></i><b>2</b></div>
<div class="a ln" style="left:20px;top:253px;width:60px;height:1px"></div>
<div class="a jc" style="left:80px;top:244px;width:137px;background:#FAFAF4"><i></i></div>
<div class="a jb" style="left:83px;top:247px;width:131px;background:#6FA0C8"><span>J02</span></div>
<div class="a jc" style="left:220px;top:244px;width:67px"><i></i><b>0</b></div>
<div class="a jc" style="left:290px;top:244px;width:67px"><i></i><b>198</b></div>
<div class="a jc" style="left:360px;top:244px;width:67px"><i></i><b>289</b></div>
<div class="a jc" style="left:430px;top:244px;width:67px"><i></i><b>91</b></div>
<div class="a ln" style="left:20px;top:275px;width:60px;height:1px"></div>
<div class="a jc" style="left:80px;top:266px;width:137px;background:#FAFAF4"><i></i></div>
<div class="a jb" style="left:83px;top:269px;width:131px;background:#CE5E84"><span>J07</span></div>
<div class="a jc" style="left:220px;top:266px;width:67px"><i></i><b>0</b></div>
<div class="a jc" style="left:290px;top:266px;width:67px"><i></i><b>289</b></div>
<div class="a jc" style="left:360px;top:266px;width:67px"><i></i><b>335</b></div>
<div class="a jc" style="left:430px;top:266px;width:67px"><i></i><b>46</b></div>
<div class="a ln" style="left:20px;top:297px;width:60px;height:1px"></div>
<div class="a jc" style="left:80px;top:288px;width:137px;background:#FAFAF4"><i></i></div>
<div class="a jb" style="left:83px;top:291px;width:131px;background:#20B4EA"><span>J09</span></div>
<div class="a jc" style="left:220px;top:288px;width:67px"><i></i><b>0</b></div>
<div class="a jc" style="left:290px;top:288px;width:67px"><i></i><b>335</b></div>
<div class="a jc" style="left:360px;top:288px;width:67px"><i></i><b>420</b></div>
<div class="a jc" style="left:430px;top:288px;width:67px"><i></i><b>85</b></div>
<div class="a ln" style="left:20px;top:319px;width:60px;height:1px"></div>
<div class="a jc" style="left:80px;top:310px;width:137px;background:#FAFAF4"><i></i></div>
<div class="a jb" style="left:83px;top:313px;width:131px;background:#DDBFE8"><span>J04</span></div>
<div class="a jc" style="left:220px;top:310px;width:67px"><i></i><b>0</b></div>
<div class="a jc" style="left:290px;top:310px;width:67px"><i></i><b>420</b></div>
<div class="a jc" style="left:360px;top:310px;width:67px"><i></i><b>442</b></div>
<div class="a jc" style="left:430px;top:310px;width:67px"><i></i><b>22</b></div>
<div class="a ln" style="left:20px;top:341px;width:60px;height:1px"></div>
<div class="a jc" style="left:80px;top:332px;width:137px;background:#FAFAF4"><i></i></div>
<div class="a jb" style="left:83px;top:335px;width:131px;background:#E07010"><span>J10</span></div>
<div class="a jc" style="left:220px;top:332px;width:67px"><i></i><b>0</b></div>
<div class="a jc" style="left:290px;top:332px;width:67px"><i></i><b>442</b></div>
<div class="a jc" style="left:360px;top:332px;width:67px"><i></i><b>471</b></div>
<div class="a jc" style="left:430px;top:332px;width:67px"><i></i><b>29</b></div>
<div class="a ln" style="left:20px;top:363px;width:60px;height:1px"></div>
<div class="a jc" style="left:80px;top:354px;width:137px;background:#FAFAF4"><i></i></div>
<div class="a jb" style="left:83px;top:357px;width:131px;background:#F000F0"><span>J01</span></div>
<div class="a jc" style="left:220px;top:354px;width:67px"><i></i><b>0</b></div>
<div class="a jc" style="left:290px;top:354px;width:67px"><i></i><b>663</b></div>
<div class="a jc" style="left:360px;top:354px;width:67px"><i></i><b>691</b></div>
<div class="a jc" style="left:430px;top:354px;width:67px"><i></i><b>28</b></div>
<div class="a ln" style="left:19px;top:148px;width:1px;height:216px"></div>
<div class="a xb" style="left:13px;top:380px"></div>
<div class="a" style="left:15px;top:386px;width:9px;height:1px;background:#A5A290"></div>
<div class="a ln" style="left:26px;top:386px;width:24px;height:1px"></div>
<div class="a wc" style="left:50px;top:376px;width:167px;background:#FAFAF4"><i></i></div>
<div class="a wb" style="left:53px;top:379px;width:161px;background:#0606C0"><svg class="a" style="left:0;top:0" width="159" height="13"><rect width="159" height="13" fill="url(#P)"/></svg><div class="a wl">W02</div></div>
<div class="a wc" style="left:220px;top:376px;width:67px"><i></i><b>0</b></div>
<div class="a wc" style="left:430px;top:376px;width:67px"><i></i><b>556</b></div>
<div class="a ln" style="left:20px;top:410px;width:60px;height:1px"></div>
<div class="a jc" style="left:80px;top:401px;width:137px;background:#FAFAF4"><i></i></div>
<div class="a jb" style="left:83px;top:404px;width:131px;background:#CE5E84"><span>J07</span></div>
<div class="a jc" style="left:220px;top:401px;width:67px"><i></i><b>0</b></div>
<div class="a jc" style="left:290px;top:401px;width:67px"><i></i><b>5</b></div>
<div class="a jc" style="left:360px;top:401px;width:67px"><i></i><b>36</b></div>
<div class="a jc" style="left:430px;top:401px;width:67px"><i></i><b>31</b></div>
<div class="a ln" style="left:20px;top:432px;width:60px;height:1px"></div>
<div class="a jc" style="left:80px;top:423px;width:137px;background:#FAFAF4"><i></i></div>
<div class="a jb" style="left:83px;top:426px;width:131px;background:#35CC8C"><span>J05</span></div>
<div class="a jc" style="left:220px;top:423px;width:67px"><i></i><b>0</b></div>
<div class="a jc" style="left:290px;top:423px;width:67px"><i></i><b>36</b></div>
<div class="a jc" style="left:360px;top:423px;width:67px"><i></i><b>120</b></div>
<div class="a jc" style="left:430px;top:423px;width:67px"><i></i><b>84</b></div>
<div class="a ln" style="left:20px;top:454px;width:60px;height:1px"></div>
<div class="a jc" style="left:80px;top:445px;width:137px;background:#FAFAF4"><i></i></div>
<div class="a jb" style="left:83px;top:448px;width:131px;background:#F5D99A"><span>J03</span></div>
<div class="a jc" style="left:220px;top:445px;width:67px"><i></i><b>0</b></div>
<div class="a jc" style="left:290px;top:445px;width:67px"><i></i><b>120</b></div>
<div class="a jc" style="left:360px;top:445px;width:67px"><i></i><b>215</b></div>
<div class="a jc" style="left:430px;top:445px;width:67px"><i></i><b>95</b></div>
<div class="a ln" style="left:20px;top:476px;width:60px;height:1px"></div>
<div class="a jc" style="left:80px;top:467px;width:137px;background:#FAFAF4"><i></i></div>
<div class="a jb" style="left:83px;top:470px;width:131px;background:#AEDD0C"><span>J06</span></div>
<div class="a jc" style="left:220px;top:467px;width:67px"><i></i><b>0</b></div>
<div class="a jc" style="left:290px;top:467px;width:67px"><i></i><b>225</b></div>
<div class="a jc" style="left:360px;top:467px;width:67px"><i></i><b>238</b></div>
<div class="a jc" style="left:430px;top:467px;width:67px"><i></i><b>13</b></div>
<div class="a ln" style="left:20px;top:498px;width:60px;height:1px"></div>
<div class="a jc" style="left:80px;top:489px;width:137px;background:#FAFAF4"><i></i></div>
<div class="a jb" style="left:83px;top:492px;width:131px;background:#F000F0"><span>J01</span></div>
<div class="a jc" style="left:220px;top:489px;width:67px"><i></i><b>0</b></div>
<div class="a jc" style="left:290px;top:489px;width:67px"><i></i><b>238</b></div>
<div class="a jc" style="left:360px;top:489px;width:67px"><i></i><b>328</b></div>
<div class="a jc" style="left:430px;top:489px;width:67px"><i></i><b>90</b></div>
<div class="a ln" style="left:20px;top:520px;width:60px;height:1px"></div>
<div class="a jc" style="left:80px;top:511px;width:137px;background:#FAFAF4"><i></i></div>
<div class="a jb" style="left:83px;top:514px;width:131px;background:#DDBFE8"><span>J04</span></div>
<div class="a jc" style="left:220px;top:511px;width:67px"><i></i><b>0</b></div>
<div class="a jc" style="left:290px;top:511px;width:67px"><i></i><b>328</b></div>
<div class="a jc" style="left:360px;top:511px;width:67px"><i></i><b>342</b></div>
<div class="a jc" style="left:430px;top:511px;width:67px"><i></i><b>14</b></div>
<div class="a ln" style="left:20px;top:542px;width:60px;height:1px"></div>
<div class="a jc" style="left:80px;top:533px;width:137px;background:#FAFAF4"><i></i></div>
<div class="a jb" style="left:83px;top:536px;width:131px;background:#8C66E0"><span>J08</span></div>
<div class="a jc" style="left:220px;top:533px;width:67px"><i></i><b>0</b></div>
<div class="a jc" style="left:290px;top:533px;width:67px"><i></i><b>352</b></div>
<div class="a jc" style="left:360px;top:533px;width:67px"><i></i><b>437</b></div>
<div class="a jc" style="left:430px;top:533px;width:67px"><i></i><b>85</b></div>
<div class="a ln" style="left:20px;top:564px;width:60px;height:1px"></div>
<div class="a jc" style="left:80px;top:555px;width:137px;background:#FAFAF4"><i></i></div>
<div class="a jb" style="left:83px;top:558px;width:131px;background:#20B4EA"><span>J09</span></div>
<div class="a jc" style="left:220px;top:555px;width:67px"><i></i><b>0</b></div>
<div class="a jc" style="left:290px;top:555px;width:67px"><i></i><b>437</b></div>
<div class="a jc" style="left:360px;top:555px;width:67px"><i></i><b>498</b></div>
<div class="a jc" style="left:430px;top:555px;width:67px"><i></i><b>61</b></div>
<div class="a ln" style="left:20px;top:586px;width:60px;height:1px"></div>
<div class="a jc" style="left:80px;top:577px;width:137px;background:#FAFAF4"><i></i></div>
<div class="a jb" style="left:83px;top:580px;width:131px;background:#E07010"><span>J10</span></div>
<div class="a jc" style="left:220px;top:577px;width:67px"><i></i><b>0</b></div>
<div class="a jc" style="left:290px;top:577px;width:67px"><i></i><b>549</b></div>
<div class="a jc" style="left:360px;top:577px;width:67px"><i></i><b>558</b></div>
<div class="a jc" style="left:430px;top:577px;width:67px"><i></i><b>9</b></div>
<div class="a ln" style="left:20px;top:608px;width:60px;height:1px"></div>
<div class="a jc" style="left:80px;top:599px;width:137px;background:#FAFAF4"><i></i></div>
<div class="a jb" style="left:83px;top:602px;width:131px;background:#6FA0C8"><span>J02</span></div>
<div class="a jc" style="left:220px;top:599px;width:67px"><i></i><b>0</b></div>
<div class="a jc" style="left:290px;top:599px;width:67px"><i></i><b>558</b></div>
<div class="a jc" style="left:360px;top:599px;width:67px"><i></i><b>632</b></div>
<div class="a jc" style="left:430px;top:599px;width:67px"><i></i><b>74</b></div>
<div class="a ln" style="left:19px;top:393px;width:1px;height:216px"></div>
<div class="a xb" style="left:13px;top:625px"></div>
<div class="a" style="left:15px;top:631px;width:9px;height:1px;background:#A5A290"></div>
<div class="a" style="left:19px;top:627px;width:1px;height:9px;background:#A5A290"></div>
<div class="a ln" style="left:26px;top:631px;width:24px;height:1px"></div>
<div class="a wc" style="left:50px;top:621px;width:167px;background:#FAFAF4"><i></i></div>
<div class="a wb" style="left:53px;top:624px;width:161px;background:#A00AA0"><svg class="a" style="left:0;top:0" width="159" height="13"><rect width="159" height="13" fill="url(#P)"/></svg><div class="a wl">W03</div></div>
<div class="a wc" style="left:220px;top:621px;width:67px"><i></i><b>0</b></div>
<div class="a wc" style="left:430px;top:621px;width:67px"><i></i><b>631</b></div>
<div class="a xb" style="left:13px;top:650px"></div>
<div class="a" style="left:15px;top:656px;width:9px;height:1px;background:#A5A290"></div>
<div class="a" style="left:19px;top:652px;width:1px;height:9px;background:#A5A290"></div>
<div class="a ln" style="left:26px;top:656px;width:24px;height:1px"></div>
<div class="a wc" style="left:50px;top:646px;width:167px;background:#FAFAF4"><i></i></div>
<div class="a wb" style="left:53px;top:649px;width:161px;background:#14B414"><svg class="a" style="left:0;top:0" width="159" height="13"><rect width="159" height="13" fill="url(#P)"/></svg><div class="a wl">W04</div></div>
<div class="a wc" style="left:220px;top:646px;width:67px"><i></i><b>0</b></div>
<div class="a wc" style="left:430px;top:646px;width:67px"><i></i><b>534</b></div>
<div class="a xb" style="left:13px;top:675px"></div>
<div class="a" style="left:15px;top:681px;width:9px;height:1px;background:#A5A290"></div>
<div class="a" style="left:19px;top:677px;width:1px;height:9px;background:#A5A290"></div>
<div class="a ln" style="left:26px;top:681px;width:24px;height:1px"></div>
<div class="a wc" style="left:50px;top:671px;width:167px;background:#FAFAF4"><i></i></div>
<div class="a wb" style="left:53px;top:674px;width:161px;background:#C80808"><svg class="a" style="left:0;top:0" width="159" height="13"><rect width="159" height="13" fill="url(#P)"/></svg><div class="a wl">W05</div></div>
<div class="a wc" style="left:220px;top:671px;width:67px"><i></i><b>0</b></div>
<div class="a wc" style="left:430px;top:671px;width:67px"><i></i><b>416</b></div>
<div class="a xb" style="left:13px;top:700px"></div>
<div class="a" style="left:15px;top:706px;width:9px;height:1px;background:#A5A290"></div>
<div class="a" style="left:19px;top:702px;width:1px;height:9px;background:#A5A290"></div>
<div class="a ln" style="left:26px;top:706px;width:24px;height:1px"></div>
<div class="a wc" style="left:50px;top:696px;width:167px;background:#FAFAF4"><i></i></div>
<div class="a wb" style="left:53px;top:699px;width:161px;background:#1450F0"><svg class="a" style="left:0;top:0" width="159" height="13"><rect width="159" height="13" fill="url(#P)"/></svg><div class="a wl">W06</div></div>
<div class="a wc" style="left:220px;top:696px;width:67px"><i></i><b>0</b></div>
<div class="a wc" style="left:430px;top:696px;width:67px"><i></i><b>491</b></div>
<div class="a xb" style="left:13px;top:725px"></div>
<div class="a" style="left:15px;top:731px;width:9px;height:1px;background:#A5A290"></div>
<div class="a" style="left:19px;top:727px;width:1px;height:9px;background:#A5A290"></div>
<div class="a ln" style="left:26px;top:731px;width:24px;height:1px"></div>
<div class="a wc" style="left:50px;top:721px;width:167px;background:#FAFAF4"><i></i></div>
<div class="a wb" style="left:53px;top:724px;width:161px;background:#3A0A84"><svg class="a" style="left:0;top:0" width="159" height="13"><rect width="159" height="13" fill="url(#P)"/></svg><div class="a wl">W07</div></div>
<div class="a wc" style="left:220px;top:721px;width:67px"><i></i><b>0</b></div>
<div class="a wc" style="left:430px;top:721px;width:67px"><i></i><b>499</b></div>
<div class="a" style="left:1003px;top:129px;width:17px;height:617px;background:linear-gradient(to right,#F0EEE6,#FBFBF8 40%,#FEFEFC)"></div><div class="a" style="left:1004px;top:129px;width:15px;height:16px;border:1px solid #fff;border-radius:2px;background:linear-gradient(135deg,#CDDAFC,#B9CBF6);box-shadow:1px 1px 0 0 #A9B8DC"><svg class="a" style="left:-1px;top:-1px" width="15" height="16"><path d="M3.6 10l4-4 4 4" fill="none" stroke="#4D6185" stroke-width="2.4"/></svg></div><div class="a" style="left:1004px;top:146px;width:15px;height:485px;border:1px solid #fff;border-radius:2px;background:linear-gradient(to right,#CBD8FC,#BDCDF8 70%,#B2C4F0);box-shadow:1px 1px 0 0 #98A8CC"></div><svg class="a" style="left:1008px;top:385px" width="8" height="9"><path d="M0 .5h7M0 2.5h7M0 4.5h7M0 6.5h7" stroke="#F0F4FE"/><path d="M1 1.5h7M1 3.5h7M1 5.5h7M1 7.5h7" stroke="#8CA0D0"/></svg><div class="a" style="left:1004px;top:729px;width:15px;height:16px;border:1px solid #fff;border-radius:2px;background:linear-gradient(135deg,#CDDAFC,#B9CBF6);box-shadow:1px 1px 0 0 #A9B8DC"><svg class="a" style="left:-1px;top:-1px" width="15" height="16"><path d="M3.6 6l4 4 4-4" fill="none" stroke="#4D6185" stroke-width="2.4"/></svg></div>
<div class="a" style="left:2px;top:746px;width:1020px;height:1px;background:#F4F2E8"></div>
<div class="a" style="left:2px;top:747px;width:1022px;height:1px;background:#fff"></div>
<div class="a" style="left:3px;top:751px;font-size:11px;line-height:14px;color:#111;white-space:nowrap;transform-origin:0 0;transform:scaleX(0.983)">For Help, press F1</div>
<div class="a" style="left:933px;top:750px;width:26px;height:16px;border:1px solid;border-color:#ACA899 #fff #fff #ACA899;font-size:11px;line-height:14px;color:#222"><span class="a" style="left:0;top:0;transform-origin:0 0;transform:scaleX(0.918)"></span></div>
<div class="a" style="left:961px;top:750px;width:28px;height:16px;border:1px solid;border-color:#ACA899 #fff #fff #ACA899;font-size:11px;line-height:14px;color:#222"><span class="a" style="left:0;top:0;transform-origin:0 0;transform:scaleX(0.918)">NUM</span></div>
<div class="a" style="left:991px;top:750px;width:31px;height:16px;border:1px solid;border-color:#ACA899 #fff #fff #ACA899;font-size:11px;line-height:14px;color:#222"><span class="a" style="left:0;top:0;transform-origin:0 0;transform:scaleX(0.918)"></span></div>
<div class="a" style="left:0;top:766px;width:1024px;height:2px;background:#2468D8"></div>
</div></body></html>
